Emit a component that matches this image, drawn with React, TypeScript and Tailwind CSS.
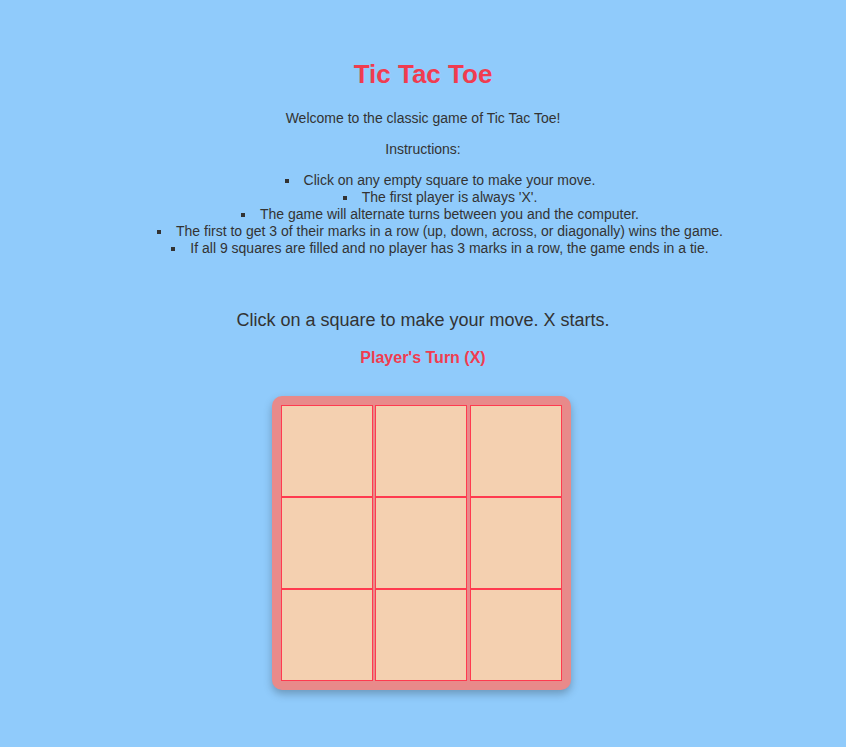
import React, { useState } from 'react';

const instructions = [
  'Click on any empty square to make your move.',
  "The first player is always 'X'.",
  'The game will alternate turns between you and the computer.',
  'The first to get 3 of their marks in a row (up, down, across, or diagonally) wins the game.',
  'If all 9 squares are filled and no player has 3 marks in a row, the game ends in a tie.',
];

const App: React.FC = () => {
  const [board, setBoard] = useState<(string | null)[]>(Array(9).fill(null));

  const play = (i: number) => {
    if (board[i]) return;
    const next = [...board];
    next[i] = 'X';
    setBoard(next);
  };

  return (
    <div className="min-h-[747px] bg-[#90cbfb] text-[#333] font-['Liberation_Sans',sans-serif] flex flex-col items-center pt-[59px] text-center">
      <h1 className="text-[26px] leading-[30px] font-bold text-[#f03c50]">Tic Tac Toe</h1>
      <p className="mt-[21px] text-[14px] leading-[17px]">Welcome to the classic game of Tic Tac Toe!</p>
      <p className="mt-[14px] text-[14px] leading-[17px]">Instructions:</p>
      <ul className="mt-[14px] pl-[34px] list-inside list-[square] text-[14px] leading-[17px]">
        {instructions.map((item) => (
          <li key={item}>{item}</li>
        ))}
      </ul>

      <p className="mt-[52px] text-[18px] leading-[22px]">Click on a square to make your move. X starts.</p>
      <p className="mt-[17px] text-[16px] leading-[20px] font-bold text-[#f03c50]">Player's Turn (X)</p>

      {/* Board */}
      <div className="mt-[28px] mr-[4px] bg-[#e88a8a] rounded-[10px] p-[9px] shadow-[0_4px_8px_rgba(0,0,0,0.25)]">
        <div className="grid grid-cols-[92px_92px_92px] gap-x-[2.5px]">
          {board.map((cell, i) => (
            <button
              key={i}
              onClick={() => play(i)}
              className="w-[92px] h-[92px] bg-[#f4d0b0] border border-[#ff3a4f] text-[48px] font-bold text-[#f03c50]"
            >
              {cell}
            </button>
          ))}
        </div>
      </div>
    </div>
  );
};

export default App;
